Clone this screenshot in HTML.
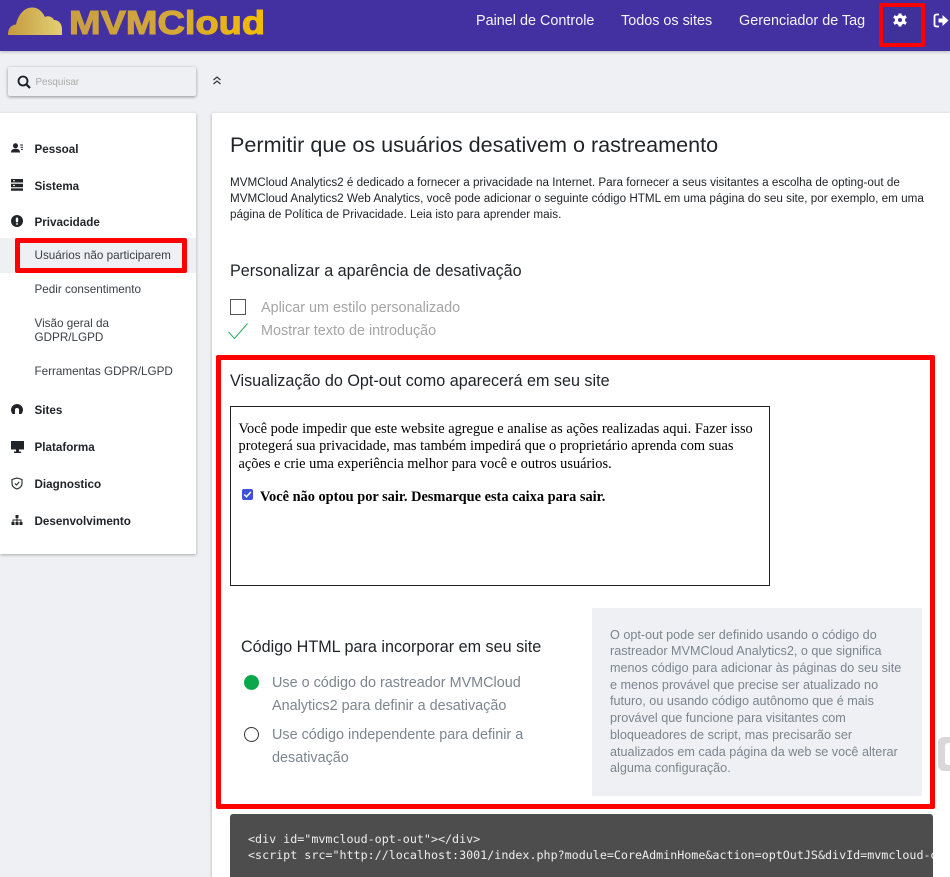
<!DOCTYPE html>
<html><head><meta charset="utf-8">
<style>
*{box-sizing:border-box}
html,body{margin:0;padding:0}
body{width:950px;height:877px;position:relative;overflow:hidden;background:#eef0f3;font-family:"Liberation Sans",sans-serif;color:#212529}
.a{position:absolute;white-space:nowrap}
.nav{color:#fff;font-size:14.4px;top:12px;line-height:18px;opacity:.95}
.m{font-size:11.65px;font-weight:700;left:34.5px;color:#212529;line-height:14px}
.s{font-size:11.7px;left:34.5px;color:#3a4046;line-height:14px}
.red{position:absolute;border-style:solid;border-color:#f00;border-radius:2px}
</style></head><body>
<div class="a" style="left:0;top:0;width:950px;height:51px;background:#4330a1;box-shadow:0 1px 3px rgba(0,0,0,.25)"></div>
<svg class="a" style="left:0;top:0" width="300" height="45" viewBox="0 0 300 45"><defs><linearGradient id="g"><stop offset="0" stop-color="#c49a3c"/><stop offset="1" stop-color="#e3cf74"/></linearGradient><linearGradient id="t" gradientUnits="userSpaceOnUse" x1="70" y1="0" x2="265" y2="0"><stop offset="0" stop-color="#c99f42"/><stop offset=".5" stop-color="#d3a63a"/><stop offset="1" stop-color="#f3bd00"/></linearGradient></defs><path d="M8 35C8 28 11 25 16 24.500C18 15 24 7.500 32 7.500C38 7.500 42 11 45 17C48 15 53 17 54 20C59 20 62 24 62 29L62 35Z" fill="url(#g)"/><text x="69" y="34" font-family="Liberation Sans" font-weight="700" font-size="33.5" textLength="196" lengthAdjust="spacingAndGlyphs" fill="url(#t)" stroke="url(#t)" stroke-width="1.100">MVMCloud</text></svg>
<div class="a nav" style="left:476px">Painel de Controle</div>
<div class="a nav" style="left:621px">Todos os sites</div>
<div class="a nav" style="left:739px">Gerenciador de Tag</div>
<div class="a" style="left:883px;top:7px;width:38px;height:36px;background:#40309a"></div>
<div class="red" style="left:879px;top:3px;width:46px;height:44px;border-width:4px"></div>
<svg class="a" style="left:893px;top:13px" width="14" height="14" viewBox="0 0 14 14"><circle cx="7" cy="7" r="3.600" fill="none" stroke="#fff" stroke-width="3.200"/><path d="M7 .5V3M7 11V13.500M.9 3.500L3.100 4.700M10.900 9.300L13.100 10.500M.9 10.500L3.100 9.300M10.900 4.700L13.100 3.500" stroke="#fff" stroke-width="3"/></svg>
<svg class="a" style="left:933px;top:13px" width="17" height="15" viewBox="0 0 17 15"><path d="M6 1.500H3.500Q1.500 1.500 1.500 3.500V11.500Q1.500 13.500 3.500 13.500H6" fill="none" stroke="#fff" stroke-width="1.800"/><path d="M5.500 5.500H9.500V2L15.500 7.500L9.500 13V9.500H5.500Z" fill="#fff"/></svg>

<div class="a" style="left:8px;top:67px;width:188px;height:29px;background:#eef0f3;box-shadow:0 1px 3px rgba(0,0,0,.4);border-radius:2px"></div>
<svg class="a" style="left:17px;top:75px" width="14" height="14" viewBox="0 0 14 14"><circle cx="6" cy="6" r="4.500" fill="none" stroke="#1a1f24" stroke-width="1.800"/><path d="M9.500 9.500L13 13" stroke="#1a1f24" stroke-width="2.200"/></svg>
<div class="a" style="left:35.500px;top:77px;font-size:9.800px;line-height:12px;color:#aaa">Pesquisar</div>
<svg class="a" style="left:212px;top:75px" width="10" height="11" viewBox="0 0 10 11"><path d="M1.500 5L5 2L8.500 5M1.500 9L5 6L8.500 9" fill="none" stroke="#333" stroke-width="1.200"/></svg>

<div class="a" style="left:0;top:113px;width:196px;height:441px;background:#fff;box-shadow:0 1px 3px rgba(0,0,0,.3)"></div>
<div class="a" style="left:0;top:238px;width:196px;height:35px;background:#eef0f3"></div>
<svg class="a" style="left:11px;top:143px" width="13" height="10" viewBox="0 0 13 10"><circle cx="4.500" cy="2.800" r="2.500" fill="#212529"/><path d="M0 9.500Q0 5.800 4.500 5.800Q9 5.800 9 9.500Z" fill="#212529"/><path d="M9 2H12M9.500 4.200H12M10 6.400H12" stroke="#212529"/></svg>
<div class="a m" style="top:143px">Pessoal</div>
<svg class="a" style="left:11px;top:179px" width="12" height="13" viewBox="0 0 12 13"><path d="M0 0H12V3.500H0ZM0 4.700H12V8.200H0ZM0 9.400H12V11.800H0Z" fill="#212529"/><path d="M2 1.700H4M2 6.400H4" stroke="#fff"/></svg>
<div class="a m" style="top:180px">Sistema</div>
<svg class="a" style="left:11px;top:215px" width="12" height="12" viewBox="0 0 12 12"><circle cx="6" cy="6" r="6" fill="#212529"/><rect x="4.800" y="2.500" width="2.400" height="5" rx="1.200" fill="#fff"/><circle cx="6" cy="9" r=".9" fill="#fff"/></svg>
<div class="a m" style="top:216px">Privacidade</div>
<div class="red" style="left:15px;top:238px;width:172px;height:35px;border-width:5px"></div>
<div class="a s" style="top:249px">Usuários não participarem</div>
<div class="a s" style="top:283px">Pedir consentimento</div>
<div class="a s" style="top:317px">Visão geral da</div>
<div class="a s" style="top:331px">GDPR/LGPD</div>
<div class="a s" style="top:365px">Ferramentas GDPR/LGPD</div>
<svg class="a" style="left:11px;top:404px" width="12" height="10" viewBox="0 0 12 10"><path d="M1.500 10Q0 8 0 6A6 6 0 0 1 12 6Q12 8 10.500 10H8V6A2 2 0 0 0 4 6V10Z" fill="#212529"/></svg>
<div class="a m" style="top:404px">Sites</div>
<svg class="a" style="left:11px;top:441px" width="13" height="12" viewBox="0 0 13 12"><path d="M0 0H13V8.500H0ZM5 8.500H8V10.500H10V12H3V10.500H5Z" fill="#212529"/></svg>
<div class="a m" style="top:441px">Plataforma</div>
<svg class="a" style="left:11px;top:477px" width="12" height="13" viewBox="0 0 12 13"><path d="M6 1L11 2.500V6.500Q11 10.500 6 12Q1 10.500 1 6.500V2.500Z" fill="none" stroke="#212529" stroke-width="1.100"/><path d="M3.800 6.500L5.500 8L8.300 4.800" fill="none" stroke="#212529" stroke-width="1.100"/></svg>
<div class="a m" style="top:478px">Diagnostico</div>
<svg class="a" style="left:11px;top:515px" width="12" height="11" viewBox="0 0 12 11"><path d="M4.500 0H7.500V3H6.500V4.500H10.500V7H11.500V10H8.500V7H9.500V5.500H6.500V7H7.500V10H4.500V7H5.500V5.500H2.500V7H3.500V10H.5V7H1.500V4.500H5.500V3H4.500Z" fill="#212529"/></svg>
<div class="a m" style="top:515px">Desenvolvimento</div>

<div class="a" style="left:212px;top:113px;width:738px;height:764px;background:#fff;box-shadow:0 1px 3px rgba(0,0,0,.3)"></div>
<div class="a" style="left:230px;top:131px;font-size:21.580px;line-height:27px;color:#212529">Permitir que os usuários desativem o rastreamento</div>
<div class="a" style="left:230px;top:175px;font-size:11.690px;line-height:16px;color:#212529">MVMCloud Analytics2 é dedicado a fornecer a privacidade na Internet. Para fornecer a seus visitantes a escolha de opting-out de<br>MVMCloud Analytics2 Web Analytics, você pode adicionar o seguinte código HTML em uma página do seu site, por exemplo, em uma<br>página de Política de Privacidade. Leia isto para aprender mais.</div>
<div class="a" style="left:230px;top:261px;font-size:16.150px;line-height:20px;color:#212529">Personalizar a aparência de desativação</div>
<div class="a" style="left:230px;top:299px;width:16px;height:16px;border:1px solid #555"></div>
<div class="a" style="left:261px;top:299px;font-size:14.400px;line-height:18px;color:#a5a5a5">Aplicar um estilo personalizado</div>
<svg class="a" style="left:227px;top:322px" width="22" height="18" viewBox="0 0 22 18"><path d="M1.500 10L7.500 16.500L20.500 1.500" fill="none" stroke="#27ae60" stroke-width="1"/></svg>
<div class="a" style="left:261px;top:322px;font-size:14.400px;line-height:18px;color:#a5a5a5">Mostrar texto de introdução</div>

<div class="red" style="left:216px;top:355px;width:719px;height:454px;border-width:5px"></div>
<div class="a" style="left:230px;top:371px;font-size:16.170px;line-height:20px;color:#212529">Visualização do Opt-out como aparecerá em seu site</div>
<div class="a" style="left:230px;top:406px;width:540px;height:180px;border:1px solid #222;background:#fff"></div>
<div class="a" style="left:238.500px;top:421px;font-family:'Liberation Serif',serif;font-size:14.380px;line-height:17.300px;color:#000">Você pode impedir que este website agregue e analise as ações realizadas aqui. Fazer isso<br>protegerá sua privacidade, mas também impedirá que o proprietário aprenda com suas<br>ações e crie uma experiência melhor para você e outros usuários.</div>
<div class="a" style="left:242px;top:489px;width:11px;height:11px;background:#3f51d8;border-radius:2px"></div>
<svg class="a" style="left:242px;top:489px" width="11" height="11" viewBox="0 0 11 11"><path d="M2.300 5.500L4.500 7.800L8.800 3" fill="none" stroke="#fff" stroke-width="1.500"/></svg>
<div class="a" style="left:260px;top:488px;font-family:'Liberation Serif',serif;font-size:14.360px;line-height:18px;font-weight:700;color:#000">Você não optou por sair. Desmarque esta caixa para sair.</div>

<div class="a" style="left:241px;top:637px;font-size:16.160px;line-height:20px;color:#212529">Código HTML para incorporar em seu site</div>
<div class="a" style="left:244px;top:675px;width:15px;height:15px;border-radius:50%;background:#0aa84a"></div>
<div class="a" style="left:272px;top:672px;font-size:14.400px;line-height:23px;color:#7c858e">Use o código do rastreador MVMCloud<br>Analytics2 para definir a desativação</div>
<div class="a" style="left:244px;top:727px;width:15px;height:15px;border-radius:50%;border:1px solid #333;background:#fff"></div>
<div class="a" style="left:272px;top:724px;font-size:14.400px;line-height:23px;color:#7c858e">Use código independente para definir a<br>desativação</div>

<div class="a" style="left:592px;top:608px;width:330px;height:188px;background:#eef0f3"></div>
<div class="a" style="left:610px;top:626.600px;font-size:12.640px;line-height:16.700px;color:#7c858e">O opt-out pode ser definido usando o código do<br>rastreador MVMCloud Analytics2, o que significa<br>menos código para adicionar às páginas do seu site<br>e menos provável que precise ser atualizado no<br>futuro, ou usando código autônomo que é mais<br>provável que funcione para visitantes com<br>bloqueadores de script, mas precisarão ser<br>atualizados em cada página da web se você alterar<br>alguma configuração.</div>
<div class="a" style="left:938px;top:737px;width:12px;height:34px;background:#d8d8d8;border-radius:6px 0 0 6px"></div>
<div class="a" style="left:945px;top:743px;width:5px;height:22px;background:#fff;border-radius:3px 0 0 3px"></div>

<div class="a" style="left:230px;top:814px;width:703px;height:63px;background:#4d4d4d;border-radius:3px 3px 0 0;overflow:hidden">
<div class="a" style="left:18px;top:17px;font-family:'DejaVu Sans Mono','Liberation Mono',monospace;font-size:11.700px;line-height:16px;color:#eee">&lt;div id="mvmcloud-opt-out"&gt;&lt;/div&gt;<br>&lt;script src="http://localhost:3001/index.php?module=CoreAdminHome&amp;action=optOutJS&amp;divId=mvmcloud-opt-out"&gt;&lt;/script&gt;</div>
</div>
</body></html>
